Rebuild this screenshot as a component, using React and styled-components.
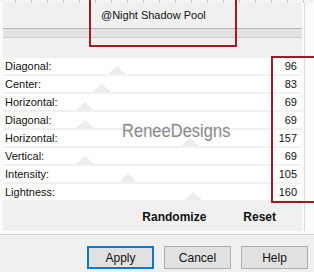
import React from 'react';
import styled, { createGlobalStyle } from 'styled-components';

const GlobalStyle = createGlobalStyle`
  html, body {
    margin: 0;
    padding: 0;
    background: #f0f0f0;
  }
  body {
    font-family: "Liberation Sans", Arial, sans-serif;
  }
`;

const Window = styled.div`
  position: relative;
  width: 314px;
  height: 272px;
  overflow: hidden;
  background: #f0f0f0;
  display: flex;
  flex-direction: column;
`;

const TopStrip = styled.div`
  height: 3px;
  flex: none;
  background-color: #f4f4f4;
  background-image: linear-gradient(to right, transparent 0 15px, #c9c9c9 15px 23px, transparent 23px);
  background-size: 16px 3px;
  background-position: 0 0;
`;

const Body = styled.div`
  display: flex;
  background: #fbfbfb;
  padding-left: 3px;
`;

const Panel = styled.div`
  width: 299px;
  display: flex;
  flex-direction: column;
`;

const Gutter = styled.div`
  flex: 1;
  display: flex;
  padding-left: 2px;
`;

const GutterLine = styled.div`
  width: 1px;
  background: #dadada;
`;

const Header = styled.div`
  height: 55px;
  background: #f0f0f0;
  display: flex;
  flex-direction: column;
`;

const PresetName = styled.div`
  height: 25px;
  padding-left: 98px;
  font-size: 11px;
  line-height: 25px;
  color: #111;
`;

const PreviewBar = styled.div`
  height: 8px;
  background: #e2e2e2;
  border-top: 1px solid #b9b9b9;
  border-bottom: 1px solid #cdcdcd;
`;

const Rows = styled.div`
  display: flex;
  flex-direction: column;
`;

const Row = styled.div`
  position: relative;
  height: 16px;
  background: #ffffff;
  border-bottom: 2px solid #f1f1f1;
  display: flex;
  align-items: center;
  justify-content: space-between;
  padding: 0 5px 0 2px;
  font-size: 11px;
  color: #111;
`;

const Label = styled.span`
  position: relative;
  z-index: 1;
`;

const Value = styled.span`
  position: relative;
  z-index: 1;
`;

const Thumb = styled.div`
  position: absolute;
  bottom: 0;
  width: 0;
  height: 0;
  margin-left: -9px;
  border-left: 9px solid transparent;
  border-right: 9px solid transparent;
  border-bottom: 8px solid #ececec;
`;

const ActionBand = styled.div`
  height: 29px;
  background: #f0f0f0;
  display: flex;
  align-items: center;
  justify-content: flex-end;
  gap: 37px;
  padding-right: 26px;
  font-size: 12px;
  font-weight: bold;
  color: #111;
`;

const Divider = styled.div`
  height: 3px;
  flex: none;
  background: #fbfbfb;
  border-bottom: 1px solid #d4d4d4;
`;

const Footer = styled.div`
  flex: 1;
  display: flex;
  justify-content: flex-end;
  align-items: flex-start;
  gap: 10px;
  padding: 11px 6px 0 0;
`;

const Button = styled.button`
  box-sizing: border-box;
  width: 67px;
  height: 23px;
  padding: 0;
  background: #e1e1e1;
  border: ${p => (p.$default ? '2px solid #0a78d4' : '1px solid #adadad')};
  font-family: "Liberation Sans", Arial, sans-serif;
  font-size: 12px;
  color: #111;
`;

const Highlight = styled.div`
  position: absolute;
  border: 2px solid #9e1a26;
  pointer-events: none;
`;

const Watermark = styled.div`
  position: absolute;
  left: 122px;
  top: 120px;
  font-size: 19px;
  color: #8a8a8a;
  transform: scaleX(0.87);
  transform-origin: left center;
  text-shadow: 1px 1px 1px rgba(255, 255, 255, 0.9), -1px -1px 1px rgba(0, 0, 0, 0.08);
`;

const settings = [
  { label: 'Diagonal:', value: 96 },
  { label: 'Center:', value: 83 },
  { label: 'Horizontal:', value: 69 },
  { label: 'Diagonal:', value: 69 },
  { label: 'Horizontal:', value: 157 },
  { label: 'Vertical:', value: 69 },
  { label: 'Intensity:', value: 105 },
  { label: 'Lightness:', value: 160 },
];

export default function App() {
  return (
    <>
      <GlobalStyle />
      <Window>
        <TopStrip />
        <Body>
          <Panel>
            <Header>
              <PresetName>@Night Shadow Pool</PresetName>
              <PreviewBar />
            </Header>
            <Rows>
              {settings.map((s, i) => (
                <Row key={i}>
                  <Thumb style={{ left: `${Math.round(s.value * 1.19)}px` }} />
                  <Label>{s.label}</Label>
                  <Value>{s.value}</Value>
                </Row>
              ))}
            </Rows>
            <ActionBand>
              <span>Randomize</span>
              <span>Reset</span>
            </ActionBand>
          </Panel>
          <Gutter>
            <GutterLine />
          </Gutter>
        </Body>
        <Divider />
        <Footer>
          <Button $default>Apply</Button>
          <Button>Cancel</Button>
          <Button>Help</Button>
        </Footer>
        <Highlight style={{ left: 89, top: -3, width: 144, height: 46 }} />
        <Highlight style={{ left: 271, top: 56, width: 50, height: 143 }} />
        <Watermark>ReneeDesigns</Watermark>
      </Window>
    </>
  );
}
